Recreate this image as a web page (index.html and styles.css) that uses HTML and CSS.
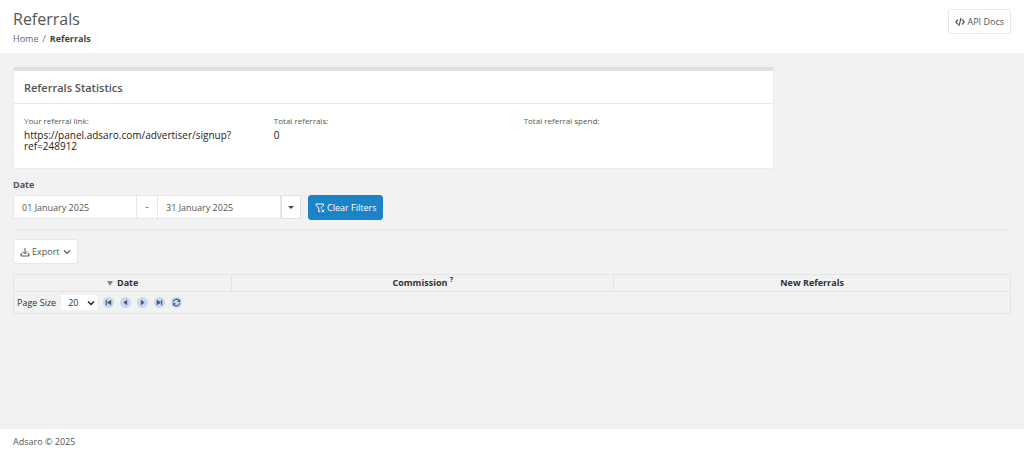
FILE: index.html
```html
<!DOCTYPE html>
<html lang="en">
<head>
<meta charset="utf-8">
<meta name="viewport" content="width=device-width, initial-scale=1">
<title>Referrals</title>
<link rel="stylesheet" href="styles.css">
</head>
<body>
<header class="page-header">
  <div>
    <h1 class="page-title">Referrals</h1>
    <nav class="breadcrumb" aria-label="Breadcrumb"><a href="#">Home</a><span>/</span><strong>Referrals</strong></nav>
  </div>
  <button class="btn" type="button">
    <svg class="icon" viewBox="0 0 20 20" fill="none" stroke="currentColor" stroke-width="2.400"><path d="M6 5 1.500 10 6 15M14 5l4.500 5L14 15M12 2 8 18"/></svg>
    API Docs
  </button>
</header>

<main class="content">
  <section class="card">
    <h2 class="card-title">Referrals Statistics</h2>
    <dl class="stats">
      <div><dt>Your referral link:</dt><dd>https://panel.adsaro.com/advertiser/signup?<br>ref=248912</dd></div>
      <div><dt>Total referrals:</dt><dd>0</dd></div>
      <div><dt>Total referral spend:</dt><dd></dd></div>
    </dl>
  </section>

  <form class="filters">
    <label class="filter-label" for="from">Date</label>
    <div class="filter-row">
      <div class="range">
        <input class="date" id="from" type="text" value="01 January 2025">
        <span class="dash">-</span>
        <input class="date" type="text" value="31 January 2025" aria-label="End date">
        <button class="range-toggle" type="button" aria-label="Choose period"><span class="caret"></span></button>
      </div>
      <button class="btn primary" type="button">
        <svg class="icon" viewBox="0 0 20 20" fill="none" stroke="currentColor" stroke-width="2"><path d="M10.500 17.500H7.500V10L2 4.500V2h15v2.500L12.500 9v2M13 13l5.500 5.500M18.500 13 13 18.500"/></svg>
        Clear Filters
      </button>
    </div>
  </form>

  <button class="btn export" type="button">
    <svg class="icon" viewBox="0 0 20 20" fill="none" stroke="currentColor" stroke-width="2"><path d="M10 2v11M5.500 9l4.500 4.500L14.500 9M5 13.500H2V18h16v-4.500h-3"/></svg>
    Export
    <svg class="chevron" viewBox="0 0 8 8" fill="none" stroke="currentColor" stroke-width="1.200"><path d="m1 2.500 3 3 3-3"/></svg>
  </button>

  <table class="grid">
    <colgroup><col class="col-date"><col class="col-commission"><col></colgroup>
    <thead>
      <tr><th scope="col"><span class="sort"></span>Date</th><th scope="col">Commission <sup>?</sup></th><th scope="col">New Referrals</th></tr>
    </thead>
    <tfoot>
      <tr><td colspan="3">
        <div class="pager">
          <label for="size">Page Size</label>
          <select class="page-size" id="size"><option>20</option><option>50</option><option>100</option></select>
          <div class="pager-buttons">
            <button class="round" type="button" aria-label="First page"><svg viewBox="0 0 10 10"><path d="M2.500 2.500h1v5h-1zM7.500 2.500v5L3.500 5z"/></svg></button>
            <button class="round" type="button" aria-label="Previous page"><svg viewBox="0 0 10 10"><path d="M6.500 2.500v5L3 5z"/></svg></button>
            <button class="round" type="button" aria-label="Next page"><svg viewBox="0 0 10 10"><path d="M3.500 2.500v5L7 5z"/></svg></button>
            <button class="round" type="button" aria-label="Last page"><svg viewBox="0 0 10 10"><path d="M2.500 2.500v5l4-2.500zM6.500 2.500h1v5h-1z"/></svg></button>
            <button class="round" type="button" aria-label="Refresh"><svg viewBox="0 0 10 10"><path d="M2 4.500a3 3 0 0 1 5.500-1.200M8 5.500a3 3 0 0 1-5.500 1.200" fill="none" stroke="#4b5868" stroke-width="1"/><path d="M8.300 1.800v2.700H5.600zM1.700 8.200V5.500h2.700z"/></svg></button>
          </div>
        </div>
      </td></tr>
    </tfoot>
  </table>
</main>

<footer class="page-footer">Adsaro © 2025</footer>
</body>
</html>
```
FILE: styles.css
```css
* { box-sizing: border-box; }

body {
  margin: 0;
  min-height: 100vh;
  display: flex;
  flex-direction: column;
  background: #f2f2f2;
  color: #555;
  font: 9px/12px "Open Sans", "Noto Sans", sans-serif;
}

button, input, select { font-family: inherit; color: inherit; }

.page-header {
  display: flex;
  justify-content: space-between;
  align-items: flex-start;
  padding: 9px 13px 8px;
  background: #fff;
}

.page-title {
  margin: 0 0 4px;
  font-size: 16px;
  line-height: 20px;
  font-weight: 400;
}

.breadcrumb { display: flex; gap: 4px; color: #666; }
.breadcrumb a { color: inherit; text-decoration: none; }
.breadcrumb strong { color: #444; }

.btn {
  display: inline-flex;
  align-items: center;
  gap: 2px;
  height: 25px;
  padding: 0 6px;
  border: 1px solid #e4e6eb;
  border-radius: 3px;
  background: #fff;
  font-size: 9px;
  line-height: 12px;
}
.icon { width: 10px; height: 10px; }
.chevron { width: 8px; height: 8px; margin-left: 1px; }
.primary { border-color: #1c84c6; background: #1c84c6; color: #fff; }

.content { flex: 1; padding: 14px 13px 0; }

.card {
  width: 76.300%;
  border: 1px solid #e9ebee;
  border-top: 4px solid #dde1e5;
  border-radius: 2px;
  background: #fff;
}
.card-title {
  margin: 0;
  padding: 10px 10px 8px;
  border-bottom: 1px solid #e9e9ec;
  font-size: 11px;
  line-height: 14px;
  font-weight: 600;
}
.stats {
  display: grid;
  grid-template-columns: repeat(3, 1fr);
  margin: 0;
  padding: 11px 0 16px 10px;
}
.stats dt { font-size: 8px; line-height: 12px; }
.stats dd { margin: 3px 0 0; color: #222; font-size: 10px; line-height: 11px; font-weight: 500; }

.filters { padding: 10px 0 9px; border-bottom: 1px solid #e5e6ec; }
.filter-label { display: block; margin-bottom: 4px; font-weight: 700; }
.filter-row { display: flex; gap: 7px; align-items: flex-start; }
.range { display: flex; height: 24px; }
.date {
  width: 124px;
  padding: 0 8px;
  border: 1px solid #e6e7ea;
  border-radius: 0;
  background: #fff;
  font-size: 9px;
}
.dash { width: 20px; border: solid #e6e7ea; border-width: 1px 0; background: #fff; text-align: center; line-height: 20px; font-size: 10px; }
.range-toggle {
  display: grid;
  place-items: center;
  width: 20px;
  padding: 0;
  border: 1px solid #dfe1e8;
  background: #fff;
}
.caret { border: 3px solid transparent; border-top-color: #444; border-bottom: 0; }

.export { margin: 9px 0 10px; }

.grid {
  width: 100%;
  table-layout: fixed;
  border-collapse: collapse;
  color: #333;
}
.col-date { width: 21.900%; }
.col-commission { width: 38.300%; }
.grid th, .grid td { border: 1px solid #e5e5e5; }
.grid th { height: 17px; padding: 0; line-height: 12px; }
.grid td { padding: 3px; }
.grid sup { font-size: 7px; line-height: 0; }
.sort {
  display: inline-block;
  margin-right: 4px;
  border: 3px solid transparent;
  border-top: 5px solid #7d8896;
  border-bottom: 0;
}
.pager { display: flex; align-items: center; }
.page-size {
  appearance: none;
  width: 36px;
  height: 15px;
  margin: 0 6px 0 5px;
  padding: 0 0 0 7px;
  border: 0;
  background: #fff url("data:image/svg+xml,%3Csvg xmlns='http://www.w3.org/2000/svg' viewBox='0 0 8 8'%3E%3Cpath d='m1 2.500 3 3 3-3' fill='none' stroke='%23222' stroke-width='1.500'/%3E%3C/svg%3E") no-repeat right 2px center / 8px 8px;
  font-size: 9px;
}
.pager-buttons { display: flex; gap: 6px; }
.round {
  display: grid;
  width: 11px;
  height: 11px;
  padding: 0;
  border: 0;
  border-radius: 50%;
  background: #c7d9f2;
}
.round svg { width: 11px; height: 11px; fill: #4b5868; }

.page-footer { padding: 7px 13px; background: #fff; }
```
